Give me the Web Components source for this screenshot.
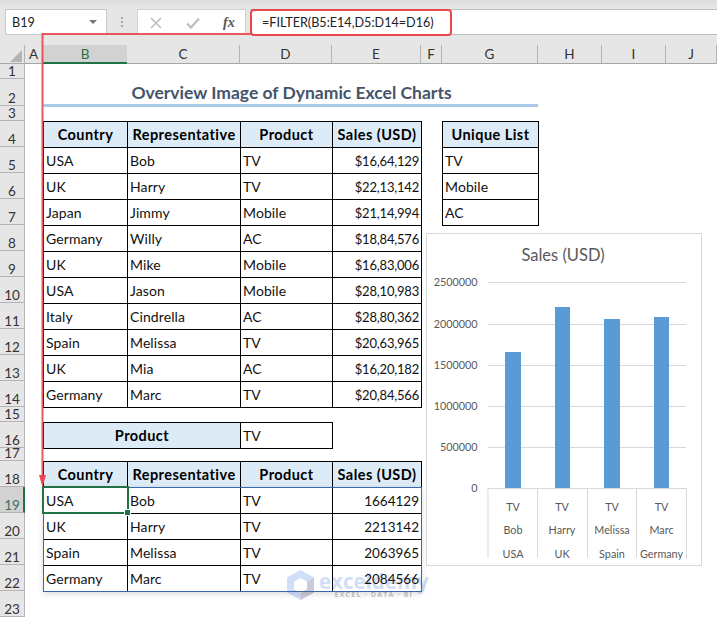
<!DOCTYPE html>
<html lang="en">
<head>
<meta charset="utf-8">
<title>Overview Image of Dynamic Excel Charts</title>
<style>
    html, body { margin: 0; padding: 0; background: #fff; }
    body { font-family: Lato, "Liberation Sans", sans-serif; }
</style>
</head>
<body>
<xl-app>
    <xl-watermark></xl-watermark>
    <xl-formula-bar name="B19" formula="=FILTER(B5:E14,D5:D14=D16)"></xl-formula-bar>
    <xl-col-header active="B"></xl-col-header>
    <xl-sheet>
        <xl-row-header active="19"></xl-row-header>
        <xl-grid>
            <xl-title style="grid-column: 2 / 8; grid-row: 2">Overview Image of Dynamic Excel Charts</xl-title>

            <xl-table cols="84 113 92 89" style="grid-column: 2 / 6; grid-row: 4 / 15">
                <xl-cell head>Country</xl-cell><xl-cell head>Representative</xl-cell><xl-cell head>Product</xl-cell><xl-cell head>Sales (USD)</xl-cell>
                <xl-cell>USA</xl-cell><xl-cell>Bob</xl-cell><xl-cell>TV</xl-cell><xl-cell num="cur">$16,64,129</xl-cell>
                <xl-cell>UK</xl-cell><xl-cell>Harry</xl-cell><xl-cell>TV</xl-cell><xl-cell num="cur">$22,13,142</xl-cell>
                <xl-cell>Japan</xl-cell><xl-cell>Jimmy</xl-cell><xl-cell>Mobile</xl-cell><xl-cell num="cur">$21,14,994</xl-cell>
                <xl-cell>Germany</xl-cell><xl-cell>Willy</xl-cell><xl-cell>AC</xl-cell><xl-cell num="cur">$18,84,576</xl-cell>
                <xl-cell>UK</xl-cell><xl-cell>Mike</xl-cell><xl-cell>Mobile</xl-cell><xl-cell num="cur">$16,83,006</xl-cell>
                <xl-cell>USA</xl-cell><xl-cell>Jason</xl-cell><xl-cell>Mobile</xl-cell><xl-cell num="cur">$28,10,983</xl-cell>
                <xl-cell>Italy</xl-cell><xl-cell>Cindrella</xl-cell><xl-cell>AC</xl-cell><xl-cell num="cur">$28,80,362</xl-cell>
                <xl-cell>Spain</xl-cell><xl-cell>Melissa</xl-cell><xl-cell>TV</xl-cell><xl-cell num="cur">$20,63,965</xl-cell>
                <xl-cell>UK</xl-cell><xl-cell>Mia</xl-cell><xl-cell>AC</xl-cell><xl-cell num="cur">$16,20,182</xl-cell>
                <xl-cell>Germany</xl-cell><xl-cell>Marc</xl-cell><xl-cell>TV</xl-cell><xl-cell num="cur">$20,84,566</xl-cell>
            </xl-table>

            <xl-table cols="96" style="grid-column: 7; grid-row: 4 / 8">
                <xl-cell head>Unique List</xl-cell>
                <xl-cell>TV</xl-cell>
                <xl-cell>Mobile</xl-cell>
                <xl-cell>AC</xl-cell>
            </xl-table>

            <xl-table cols="197 92" style="grid-column: 2 / 5; grid-row: 16">
                <xl-cell head>Product</xl-cell><xl-cell>TV</xl-cell>
            </xl-table>

            <xl-table cols="84 113 92 89" style="grid-column: 2 / 6; grid-row: 18 / 23">
                <xl-cell head>Country</xl-cell><xl-cell head>Representative</xl-cell><xl-cell head>Product</xl-cell><xl-cell head>Sales (USD)</xl-cell>
                <xl-cell>USA</xl-cell><xl-cell>Bob</xl-cell><xl-cell>TV</xl-cell><xl-cell num>1664129</xl-cell>
                <xl-cell>UK</xl-cell><xl-cell>Harry</xl-cell><xl-cell>TV</xl-cell><xl-cell num>2213142</xl-cell>
                <xl-cell>Spain</xl-cell><xl-cell>Melissa</xl-cell><xl-cell>TV</xl-cell><xl-cell num>2063965</xl-cell>
                <xl-cell>Germany</xl-cell><xl-cell>Marc</xl-cell><xl-cell>TV</xl-cell><xl-cell num>2084566</xl-cell>
            </xl-table>

            <xl-range kind="spill" style="grid-column: 2 / 6; grid-row: 19 / 23"></xl-range>
            <xl-range kind="active" style="grid-column: 2; grid-row: 19"></xl-range>
            <xl-chart></xl-chart>
        </xl-grid>
    </xl-sheet>
    <xl-callout></xl-callout>
</xl-app>

<script>
const COLUMNS = [['A', 18], ['B', 84], ['C', 113], ['D', 92], ['E', 89], ['F', 21], ['G', 96], ['H', 64], ['I', 64], ['J', 51]];
const ROWS = [15, 27, 15, 26, 26, 26, 26, 26, 26, 26, 26, 26, 26, 26, 15, 26, 13, 26, 26, 26, 26, 26, 26];

class XlApp extends HTMLElement {
    constructor() {
        super();
        this.attachShadow({ mode: 'open' });
        this.shadowRoot.innerHTML = `
            <style>
                :host {
                    display: flex;
                    flex-direction: column;
                    position: relative;
                    width: 717px;
                    height: 617px;
                    overflow: hidden;
                    background: #fff;
                    font-family: Lato, "Liberation Sans", sans-serif;
                }
            </style>
            <slot></slot>
        `;
    }
}

class XlFormulaBar extends HTMLElement {
    constructor() {
        super();
        this.attachShadow({ mode: 'open' });
    }

    connectedCallback() {
        this.shadowRoot.innerHTML = `
            <style>
                :host {
                    display: block;
                    height: 45px;
                    box-sizing: border-box;
                    padding-top: 9px;
                    background: linear-gradient(#dcdcdc 0, #e6e6e6 8px);
                    color: #222;
                }
                .bar {
                    display: flex;
                    align-items: stretch;
                    height: 26px;
                    font-size: 12.6px;
                }
                .name {
                    display: flex;
                    align-items: center;
                    justify-content: space-between;
                    box-sizing: border-box;
                    width: 102px;
                    margin-left: 5px;
                    padding: 0 6px 0 6px;
                    background: #fff;
                    border: 1px solid #c8c8c8;
                }
                .name i {
                    width: 0;
                    height: 0;
                    border-left: 4px solid transparent;
                    border-right: 4px solid transparent;
                    border-top: 4px solid #777;
                    margin-right: 3px;
                }
                .dots {
                    display: flex;
                    justify-content: center;
                    align-items: center;
                    width: 30px;
                }
                .buttons {
                    display: flex;
                    align-items: center;
                    box-sizing: border-box;
                    width: 109px;
                    background: #fff;
                    border: 1px solid #d0d0d0;
                    border-bottom: 0;
                    padding-left: 12px;
                }
                .buttons svg { flex: none; }
                .fx {
                    font: italic 700 14px "Liberation Serif", serif;
                    color: #555;
                    margin-left: 23px;
                }
                .input {
                    flex: 1;
                    display: flex;
                    align-items: center;
                    box-sizing: border-box;
                    margin-left: 4px;
                    padding-left: 12px;
                    background: #fff;
                    border-top: 1px solid #bdbdbd;
                    border-bottom: 1px solid #bdbdbd;
                }
            </style>
            <div class="bar">
                <div class="name"><span>${this.getAttribute('name')}</span><i></i></div>
                <div class="dots">
                    <svg width="3" height="11" viewBox="0 0 3 11"><path d="M0 0h2v2H0zM0 4h2v2H0zM0 8h2v2H0z" fill="#aaa"/></svg>
                </div>
                <div class="buttons">
                    <svg width="12" height="12" viewBox="0 0 12 12"><path d="M1 1l10 10M11 1L1 11" stroke="#bdbdbd" stroke-width="1.6" fill="none"/></svg>
                    <svg style="margin-left: 24px" width="14" height="12" viewBox="0 0 14 12"><path d="M1 6.500l4 4L13 1.500" stroke="#bdbdbd" stroke-width="2.2" fill="none"/></svg>
                    <span class="fx">fx</span>
                </div>
                <div class="input">${this.getAttribute('formula')}</div>
            </div>
        `;
    }
}

class XlColHeader extends HTMLElement {
    constructor() {
        super();
        this.attachShadow({ mode: 'open' });
    }

    connectedCallback() {
        const active = this.getAttribute('active');
        const cols = COLUMNS.map(([name, width]) =>
            `<div class="col ${name === active ? 'on' : ''}" style="width: ${width}px">${name}</div>`).join('');
        this.shadowRoot.innerHTML = `
            <style>
                :host {
                    display: flex;
                    height: 19px;
                    background: #e6e6e6;
                    font-size: 13.5px;
                    color: #333;
                }
                .corner {
                    width: 25px;
                    box-sizing: border-box;
                    flex: none;
                    border-right: 1px solid #b4b4b4;
                    border-bottom: 1px solid #a6a6a6;
                }
                .corner svg { display: block; margin: 5px 0 0 10px; }
                .col {
                    display: flex;
                    align-items: center;
                    justify-content: center;
                    box-sizing: border-box;
                    flex: none;
                    border-right: 1px solid #b4b4b4;
                    border-bottom: 1px solid #a6a6a6;
                }
                .col.on {
                    background: #d2d2d2;
                    color: #217346;
                    border-bottom: 2px solid #217346;
                    border-right: 0;
                }
            </style>
            <div class="corner"><svg width="12" height="12" viewBox="0 0 12 12"><path d="M12 0v12H0z" fill="#b4b4b4"/></svg></div>
            ${cols}
        `;
    }
}

class XlRowHeader extends HTMLElement {
    constructor() {
        super();
        this.attachShadow({ mode: 'open' });
    }

    connectedCallback() {
        const active = Number(this.getAttribute('active'));
        const rows = ROWS.map((height, i) =>
            `<div class="row ${i + 1 === active ? 'on' : ''}" style="height: ${height}px">${i + 1}</div>`).join('');
        this.shadowRoot.innerHTML = `
            <style>
                :host {
                    display: block;
                    flex: none;
                    width: 25px;
                    background: #e6e6e6;
                    font-size: 13.5px;
                    color: #333;
                }
                .row {
                    display: flex;
                    align-items: flex-end;
                    justify-content: center;
                    box-sizing: border-box;
                    border-bottom: 1px solid #b4b4b4;
                    border-right: 1px solid #b4b4b4;
                    line-height: 14px;
                    overflow: hidden;
                }
                .row.on {
                    background: #d2d2d2;
                    color: #3f6f58;
                    border-right: 2px solid #217346;
                    padding-left: 1px;
                }
            </style>
            ${rows}
        `;
    }
}

class XlSheet extends HTMLElement {
    constructor() {
        super();
        this.attachShadow({ mode: 'open' });
        this.shadowRoot.innerHTML = `
            <style>
                :host { display: flex; flex: 1; min-height: 0; position: relative; }
            </style>
            <slot></slot>
        `;
    }
}

class XlGrid extends HTMLElement {
    constructor() {
        super();
        this.attachShadow({ mode: 'open' });
        this.shadowRoot.innerHTML = `
            <style>
                :host {
                    display: grid;
                    position: relative;
                    flex: 1;
                    grid-template-columns: ${COLUMNS.map(c => c[1] + 'px').join(' ')};
                    grid-template-rows: ${ROWS.map(r => r + 'px').join(' ')};
                    font-size: 14px;
                    letter-spacing: .1px;
                    color: #111;
                }
            </style>
            <slot></slot>
        `;
    }
}

class XlTitle extends HTMLElement {
    constructor() {
        super();
        this.attachShadow({ mode: 'open' });
        this.shadowRoot.innerHTML = `
            <style>
                :host {
                    display: flex;
                    align-items: center;
                    justify-content: center;
                    box-sizing: border-box;
                    height: 28px;
                    padding: 1px 0 0 2px;
                    border-bottom: 3px solid #a9c9e8;
                    font-size: 17.5px;
                    letter-spacing: 0;
                    font-weight: 700;
                    color: #44546a;
                }
            </style>
            <slot></slot>
        `;
    }
}

class XlTable extends HTMLElement {
    constructor() {
        super();
        this.attachShadow({ mode: 'open' });
    }

    connectedCallback() {
        const cols = this.getAttribute('cols').split(' ').map(c => c + 'px').join(' ');
        this.shadowRoot.innerHTML = `
            <style>
                :host {
                    display: grid;
                    grid-template-columns: ${cols};
                    grid-auto-rows: 26px;
                    box-sizing: border-box;
                    margin: 0 -1px -1px 0;
                    border-right: 1px solid #000;
                    border-bottom: 1px solid #000;
                }
            </style>
            <slot></slot>
        `;
    }
}

class XlCell extends HTMLElement {
    constructor() {
        super();
        this.attachShadow({ mode: 'open' });
        this.shadowRoot.innerHTML = `
            <style>
                :host {
                    display: flex;
                    align-items: center;
                    box-sizing: border-box;
                    padding: 0 2px 0 2px;
                    border-left: 1px solid #000;
                    border-top: 1px solid #000;
                    white-space: nowrap;
                    overflow: hidden;
                }
                :host([head]) {
                    justify-content: center;
                    background: #ddebf7;
                    font-size: 14.5px;
                    letter-spacing: .45px;
                    font-weight: 700;
                    color: #000;
                }
                :host([num]) {
                    justify-content: flex-end;
                    font-size: 13.5px;
                    letter-spacing: 0;
                }
                :host([num="cur"]) {
                    font-size: 13px;
                    letter-spacing: -.2px;
                }
            </style>
            <slot></slot>
        `;
    }
}

class XlRange extends HTMLElement {
    constructor() {
        super();
        this.attachShadow({ mode: 'open' });
        this.shadowRoot.innerHTML = `
            <style>
                :host {
                    display: block;
                    position: relative;
                    pointer-events: none;
                }
                :host([kind="spill"]) {
                    box-sizing: border-box;
                    margin: 0 -1px -1px 0;
                    border: 1px solid #3a66ad;
                    box-shadow: 0 2px 6px rgba(0, 0, 0, .14);
                }
                :host([kind="active"]) {
                    box-sizing: border-box;
                    margin: -1px -2px -1px -1px;
                    border: 2px solid #217346;
                }
                :host([kind="active"])::after {
                    content: "";
                    position: absolute;
                    right: -4px;
                    bottom: -4px;
                    width: 5px;
                    height: 5px;
                    background: #217346;
                    border: 1px solid #fff;
                }
            </style>
        `;
    }
}

class XlChart extends HTMLElement {
    constructor() {
        super();
        this.attachShadow({ mode: 'open' });
    }

    connectedCallback() {
        // chart floats over the cells; drawing coordinates are relative to its own box
        const axis = [[0, 255], [500000, 214], [1000000, 173], [1500000, 132], [2000000, 91], [2500000, 49]];
        const bars = [[79, 16, 119], [129, 15, 74], [178, 16, 86], [228, 15, 84]];
        const cats = [[87, 'TV', 'Bob', 'USA'], [136, 'TV', 'Harry', 'UK'], [186, 'TV', 'Melissa', 'Spain'], [235.5, 'TV', 'Marc', 'Germany']];
        const ticks = [62, 111.5, 161.5, 210.5, 260.5];
        const grid = axis.slice(1).map(a => `<path d="M62 ${a[1] + .5}H260" stroke="#d9d9d9"/>`).join('');
        const labels = axis.map(a => `<text x="51.500" y="${a[1] + 4}" text-anchor="end">${a[0]}</text>`).join('');
        const rects = bars.map(b => `<rect x="${b[0]}" y="${b[2]}" width="${b[1]}" height="${255 - b[2]}" fill="#5b9bd5"/>`).join('');
        const lines = ticks.map(x => `<path d="M${x} 255V325" stroke="#d9d9d9"/>`).join('');
        const text = cats.map(c => `
            <text x="${c[0]}" y="278" text-anchor="middle">${c[1]}</text>
            <text x="${c[0]}" y="301" text-anchor="middle">${c[2]}</text>
            <text x="${c[0]}" y="325" text-anchor="middle">${c[3]}</text>`).join('');
        this.shadowRoot.innerHTML = `
            <style>
                :host {
                    display: block;
                    position: absolute;
                    left: 401px;
                    top: 169px;
                    width: 276px;
                    height: 333px;
                    box-sizing: border-box;
                    background: #fff;
                    border: 1px solid #d9d9d9;
                }
                svg { display: block; margin: -1px; }
                text { font-family: Lato, "Liberation Sans", sans-serif; font-size: 10.8px; letter-spacing: 0; fill: #595959; }
                .title { font-size: 16.5px; }
            </style>
            <svg width="276" height="333" viewBox="0 0 276 333">
                <text class="title" x="137" y="28" text-anchor="middle">Sales (USD)</text>
                ${grid}
                ${rects}
                <path d="M62 255.500H260" stroke="#d9d9d9"/>
                ${lines}
                ${labels}
                ${text}
            </svg>
        `;
    }
}

class XlWatermark extends HTMLElement {
    constructor() {
        super();
        this.attachShadow({ mode: 'open' });
        this.shadowRoot.innerHTML = `
            <style>
                :host {
                    display: flex;
                    position: absolute;
                    left: 287px;
                    top: 570px;
                    gap: 5px;
                    pointer-events: none;
                    opacity: .6;
                }
                .words { display: flex; flex-direction: column; align-items: center; }
                .brand { font: 700 20.5px/24px "Open Sans", sans-serif; color: #b4c9f5; margin-top: -1px; }
                .sub { font: 700 7px/8px "Open Sans", sans-serif; color: #a0a0a0; letter-spacing: 1.2px; margin-top: -2px; }
            </style>
            <svg width="27" height="30" viewBox="0 0 27 30">
                <path d="M13.500 0L27 7.500v15L13.500 30 0 22.500v-15z" fill="#b4c9f5"/>
                <path d="M13.500 8l6.500 3.700v7.600L13.500 23 7 19.300v-7.600z" fill="#fff"/>
                <path d="M27 7.500v15L13.500 30v-7l6.500-3.700v-7.600z" fill="#a6abb8"/>
            </svg>
            <div class="words">
                <span class="brand">exceldemy</span>
                <span class="sub">EXCEL · DATA · BI</span>
            </div>
        `;
    }
}

class XlCallout extends HTMLElement {
    constructor() {
        super();
        this.attachShadow({ mode: 'open' });
        this.shadowRoot.innerHTML = `
            <style>
                :host {
                    display: block;
                    position: absolute;
                    left: 0;
                    top: 0;
                    pointer-events: none;
                }
                svg { display: block; }
            </style>
            <svg width="717" height="617" viewBox="0 0 717 617" fill="none" stroke="#e8474e">
                <rect x="251" y="10" width="200" height="25" rx="3" stroke-width="2"/>
                <path d="M251 34H42.500V478" stroke-width="2" opacity=".9"/>
                <path d="M39 475h7l-3.500 12z" fill="#e8474e" stroke="none"/>
            </svg>
        `;
    }
}

customElements.define('xl-app', XlApp);
customElements.define('xl-formula-bar', XlFormulaBar);
customElements.define('xl-col-header', XlColHeader);
customElements.define('xl-row-header', XlRowHeader);
customElements.define('xl-sheet', XlSheet);
customElements.define('xl-grid', XlGrid);
customElements.define('xl-title', XlTitle);
customElements.define('xl-table', XlTable);
customElements.define('xl-cell', XlCell);
customElements.define('xl-range', XlRange);
customElements.define('xl-chart', XlChart);
customElements.define('xl-watermark', XlWatermark);
customElements.define('xl-callout', XlCallout);
</script>
</body>
</html>
